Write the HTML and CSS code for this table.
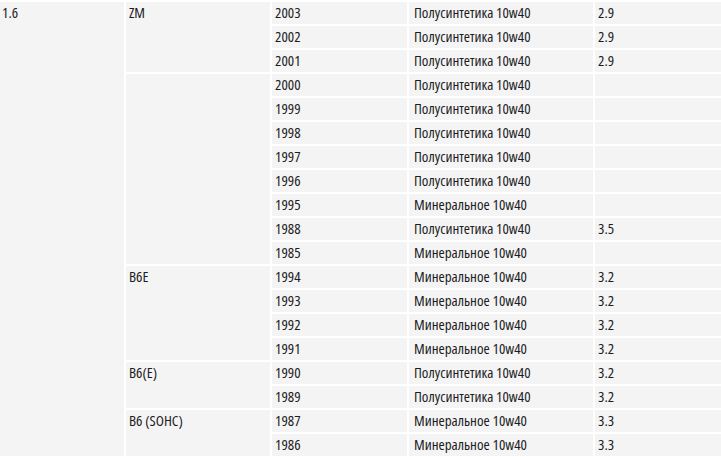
FILE: index.html
```html
<!DOCTYPE html>
<html lang="ru">
<head>
<meta charset="utf-8">
<link rel="stylesheet" href="styles.css">
</head>
<body>
<table class="oil">
  <colgroup>
    <col class="c1"><col class="c2"><col class="c3"><col class="c4"><col class="c5">
  </colgroup>
  <tbody>
    <tr><td rowspan="19" class="first">1.6</td><td rowspan="3">ZM</td><td>2003</td><td class="oiltype">Полусинтетика 10w40</td><td>2.9</td></tr>
    <tr><td>2002</td><td class="oiltype">Полусинтетика 10w40</td><td>2.9</td></tr>
    <tr><td>2001</td><td class="oiltype">Полусинтетика 10w40</td><td>2.9</td></tr>
    <tr><td rowspan="8"></td><td>2000</td><td class="oiltype">Полусинтетика 10w40</td><td></td></tr>
    <tr><td>1999</td><td class="oiltype">Полусинтетика 10w40</td><td></td></tr>
    <tr><td>1998</td><td class="oiltype">Полусинтетика 10w40</td><td></td></tr>
    <tr><td>1997</td><td class="oiltype">Полусинтетика 10w40</td><td></td></tr>
    <tr><td>1996</td><td class="oiltype">Полусинтетика 10w40</td><td></td></tr>
    <tr><td>1995</td><td class="oiltype">Минеральное 10w40</td><td></td></tr>
    <tr><td>1988</td><td class="oiltype">Полусинтетика 10w40</td><td>3.5</td></tr>
    <tr><td>1985</td><td class="oiltype">Минеральное 10w40</td><td></td></tr>
    <tr><td rowspan="4">B6E</td><td>1994</td><td class="oiltype">Минеральное 10w40</td><td>3.2</td></tr>
    <tr><td>1993</td><td class="oiltype">Минеральное 10w40</td><td>3.2</td></tr>
    <tr><td>1992</td><td class="oiltype">Минеральное 10w40</td><td>3.2</td></tr>
    <tr><td>1991</td><td class="oiltype">Минеральное 10w40</td><td>3.2</td></tr>
    <tr><td rowspan="2">B6(E)</td><td>1990</td><td class="oiltype">Полусинтетика 10w40</td><td>3.2</td></tr>
    <tr><td>1989</td><td class="oiltype">Полусинтетика 10w40</td><td>3.2</td></tr>
    <tr><td rowspan="2">B6 (SOHC)</td><td>1987</td><td class="oiltype">Минеральное 10w40</td><td>3.3</td></tr>
    <tr><td>1986</td><td class="oiltype">Минеральное 10w40</td><td>3.3</td></tr>
  </tbody>
</table>
</body>
</html>
```

FILE: styles.css
```css
html, body {
  margin: 0;
  padding: 0;
  background: #ffffff;
  overflow: hidden;
}

.oil {
  border-collapse: separate;
  border-spacing: 2px;
  margin-left: -2px;
  table-layout: fixed;
  width: 799px;
  font-family: "Open Sans", "DejaVu Sans", sans-serif;
  font-stretch: 75%;
  font-size: 15px;
  color: #1c1c24;
}

.c1 { width: 124px; }
.c2 { width: 144px; }
.c3 { width: 135px; }
.c4 { width: 184px; }
.c5 { width: 200px; }

.oil td {
  background: #f4f4f4;
  height: 22px;
  box-sizing: border-box;
  padding: 0 3px 0 3px;
  line-height: 20px;
  vertical-align: top;
  white-space: nowrap;
}

.oil td.first {
  padding-left: 2px;
}

.oil td.oiltype {
  padding-left: 5px;
}
```
